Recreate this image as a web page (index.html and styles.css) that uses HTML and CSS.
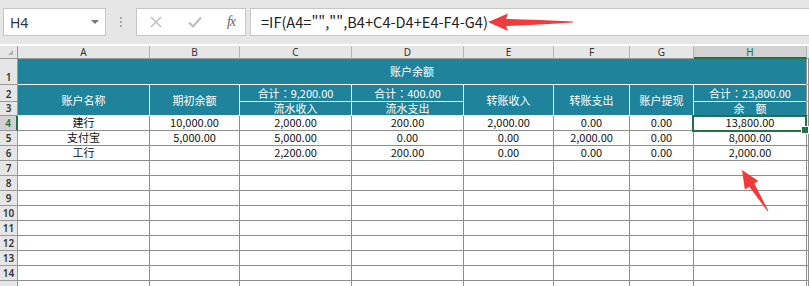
FILE: index.html
```html
<!DOCTYPE html>
<html lang="zh-CN">
<head>
<meta charset="utf-8">
<link rel="stylesheet" href="styles.css">
</head>
<body>
<div class="app">
  <div class="fbar">
    <div class="namebox"><span class="nb-text">H4</span><span class="nb-arrow"></span></div>
    <div class="dots"><i></i><i></i><i></i></div>
    <div class="funcbox">
      <svg class="ic" width="14" height="14" viewBox="0 0 14 14"><path d="M2 2 L12 12 M12 2 L2 12" stroke="#bdbdbd" stroke-width="1.4" fill="none"/></svg>
      <svg class="ic" width="16" height="14" viewBox="0 0 16 14"><path d="M2 7.5 L6 11.5 L14 2.5" stroke="#bdbdbd" stroke-width="2.2" fill="none"/></svg>
      <span class="fx">fx</span>
    </div>
    <div class="formula">=IF(A4="","",B4+C4-D4+E4-F4-G4)</div>
  </div>

  <div class="sheet">
    <div class="ch corner"><span class="tri"></span></div>
    <div class="ch">A</div><div class="ch">B</div><div class="ch">C</div><div class="ch">D</div>
    <div class="ch">E</div><div class="ch">F</div><div class="ch">G</div><div class="ch ch-sel">H</div><div class="ch last"></div>

    <div class="rh">1</div>
    <div class="t span8">账户余额</div>
    <div class="c"></div>

    <div class="rh">2</div>
    <div class="t rs2">账户名称</div>
    <div class="t rs2">期初余额</div>
    <div class="t">合计<span class="colon">：</span>9,200.00</div>
    <div class="t">合计<span class="colon">：</span>400.00</div>
    <div class="t rs2">转账收入</div>
    <div class="t rs2">转账支出</div>
    <div class="t rs2">账户提现</div>
    <div class="t edge">合计<span class="colon">：</span>23,800.00</div>
    <div class="c"></div>

    <div class="rh">3</div>
    <div class="t">流水收入</div>
    <div class="t">流水支出</div>
    <div class="t edge">余　额</div>
    <div class="c"></div>

    <div class="rh rh-sel">4</div>
    <div class="c">建行</div><div class="c">10,000.00</div><div class="c">2,000.00</div><div class="c">200.00</div>
    <div class="c">2,000.00</div><div class="c">0.00</div><div class="c">0.00</div><div class="c sel">13,800.00</div><div class="c"></div>

    <div class="rh">5</div>
    <div class="c">支付宝</div><div class="c">5,000.00</div><div class="c">5,000.00</div><div class="c">0.00</div>
    <div class="c">0.00</div><div class="c">2,000.00</div><div class="c">0.00</div><div class="c">8,000.00</div><div class="c"></div>

    <div class="rh">6</div>
    <div class="c">工行</div><div class="c"></div><div class="c">2,200.00</div><div class="c">200.00</div>
    <div class="c">0.00</div><div class="c">0.00</div><div class="c">0.00</div><div class="c">2,000.00</div><div class="c"></div>

    <div class="rh">7</div><div class="c"></div><div class="c"></div><div class="c"></div><div class="c"></div><div class="c"></div><div class="c"></div><div class="c"></div><div class="c"></div><div class="c"></div>
    <div class="rh">8</div><div class="c"></div><div class="c"></div><div class="c"></div><div class="c"></div><div class="c"></div><div class="c"></div><div class="c"></div><div class="c"></div><div class="c"></div>
    <div class="rh">9</div><div class="c"></div><div class="c"></div><div class="c"></div><div class="c"></div><div class="c"></div><div class="c"></div><div class="c"></div><div class="c"></div><div class="c"></div>
    <div class="rh">10</div><div class="c"></div><div class="c"></div><div class="c"></div><div class="c"></div><div class="c"></div><div class="c"></div><div class="c"></div><div class="c"></div><div class="c"></div>
    <div class="rh">11</div><div class="c"></div><div class="c"></div><div class="c"></div><div class="c"></div><div class="c"></div><div class="c"></div><div class="c"></div><div class="c"></div><div class="c"></div>
    <div class="rh">12</div><div class="c"></div><div class="c"></div><div class="c"></div><div class="c"></div><div class="c"></div><div class="c"></div><div class="c"></div><div class="c"></div><div class="c"></div>
    <div class="rh">13</div><div class="c"></div><div class="c"></div><div class="c"></div><div class="c"></div><div class="c"></div><div class="c"></div><div class="c"></div><div class="c"></div><div class="c"></div>
    <div class="rh">14</div><div class="c"></div><div class="c"></div><div class="c"></div><div class="c"></div><div class="c"></div><div class="c"></div><div class="c"></div><div class="c"></div><div class="c"></div>
    <div class="rh rh-cut"></div><div class="c"></div><div class="c"></div><div class="c"></div><div class="c"></div><div class="c"></div><div class="c"></div><div class="c"></div><div class="c"></div><div class="c"></div>
  </div>

  <svg class="arrows" width="809" height="286" viewBox="0 0 809 286">
    <polygon fill="#ef3b3b" points="488,22 508,13.5 506,19 540,20 573,21.6 573,22.6 540,24.6 506,26 508,31"/>
    <polygon fill="#ef3b3b" points="742,170 758.4,180.9 754.3,183.6 768.4,210.8 767.6,211.2 749.3,186.8 744.8,189.5"/>
  </svg>
</div>
</body>
</html>
```

FILE: styles.css
```css
* { box-sizing: border-box; }
html, body { margin: 0; padding: 0; }
body {
  width: 809px;
  height: 286px;
  overflow: hidden;
  background: #e6e6e6;
  font-family: "Noto Sans CJK SC", "Noto Sans", sans-serif;
  color: #1a1a1a;
}
.app { position: relative; width: 809px; height: 286px; overflow: hidden; }

/* formula bar */
.fbar {
  height: 44px;
  display: flex;
  align-items: flex-start;
  padding: 8px 0 0 3px;
}
.namebox {
  width: 103px;
  height: 28px;
  background: #fff;
  border: 1px solid #c6c6c6;
  display: flex;
  align-items: center;
  justify-content: space-between;
  padding: 0 6px 0 6px;
}
.nb-text { font-size: 14px; color: #333; font-family: "Noto Sans", sans-serif; }
.nb-arrow {
  width: 0; height: 0;
  border-left: 4px solid transparent;
  border-right: 4px solid transparent;
  border-top: 4px solid #767676;
}
.dots {
  width: 30px;
  height: 28px;
  display: flex;
  flex-direction: column;
  align-items: center;
  justify-content: center;
  gap: 2px;
}
.dots i { display: block; width: 2px; height: 2px; background: #a8a8a8; }
.funcbox {
  width: 110px;
  height: 28px;
  background: #fff;
  border: 1px solid #c6c6c6;
  display: flex;
  align-items: center;
  justify-content: space-between;
  padding: 0 10px 0 12px;
}
.fx {
  font-family: "Liberation Serif", serif;
  font-style: italic;
  font-size: 14px;
  color: #666;
  letter-spacing: -1px;
}
.formula {
  flex: 1;
  height: 28px;
  margin-left: 4px;
  margin-right: -6px;
  background: #fff;
  border: 1px solid #c6c6c6;
  padding-left: 10px;
  font-size: 14.6px;
  line-height: 26px;
  color: #222;
}

/* sheet */
.sheet {
  display: grid;
  grid-template-columns: 18px 132px 90px 112px 112px 90px 76px 64px 113px 2px;
  grid-template-rows: 15px 26px 17px 14px repeat(12, 15px);
  background: #fff;
}
.ch {
  margin-top: 2px;
  background: #e6e6e6;
  border-right: 1px solid #b4b4b4;
  border-bottom: 1px solid #9a9a9a;
  font-family: "Noto Sans", sans-serif;
  font-size: 10px;
  line-height: 12px;
  color: #333;
  text-align: center;
}
.ch.corner { position: relative; border-right-color: #9a9a9a; }
.ch.last { border-right: none; }
.tri {
  position: absolute;
  right: 4px;
  bottom: 3px;
  width: 0; height: 0;
  border-left: 5px solid transparent;
  border-bottom: 5px solid #b5b5b5;
}
.ch-sel {
  background: #d2d2d2;
  border-bottom: 2px solid #217346;
  color: #217346;
}
.rh {
  background: #e6e6e6;
  border-right: 1px solid #9a9a9a;
  border-bottom: 1px solid #9a9a9a;
  font-family: "Noto Sans", sans-serif;
  font-weight: 600;
  font-size: 10px;
  line-height: 12px;
  color: #333;
  display: flex;
  align-items: flex-end;
  justify-content: center;
  padding-bottom: 1px;
}
.rh-sel {
  background: #d2d2d2;
  border-right: 2px solid #217346;
  color: #217346;
}
.t {
  background: #1e839b;
  color: #fff;
  border-right: 1px solid #fff;
  border-bottom: 1px solid #fff;
  font-size: 11px;
  line-height: 13px;
  display: flex;
  align-items: center;
  justify-content: center;
  white-space: nowrap;
}
.colon { font-family: "Noto Sans CJK TC", "Noto Sans CJK SC", sans-serif; }
.t.edge { border-right-color: #8e8e8e; }
.span8 { grid-column: span 8; border-right-color: #8e8e8e; }
.rs2 { grid-row: span 2; }
.c {
  background: #fff;
  border-right: 1px solid #8e8e8e;
  border-bottom: 1px solid #8e8e8e;
  font-size: 11px;
  line-height: 13px;
  display: flex;
  align-items: flex-end;
  justify-content: center;
  padding-bottom: 1px;
  white-space: nowrap;
  color: #111;
}
.sel { position: relative; }
.sel::before {
  content: "";
  position: absolute;
  left: -2px;
  top: -1px;
  right: -1px;
  bottom: -2px;
  border: 2px solid #217346;
}
.sel::after {
  content: "";
  position: absolute;
  right: -3px;
  bottom: -4px;
  width: 6px;
  height: 6px;
  background: #217346;
  border: 1px solid #fff;
}

.arrows { position: absolute; left: 0; top: 0; pointer-events: none; }
```
